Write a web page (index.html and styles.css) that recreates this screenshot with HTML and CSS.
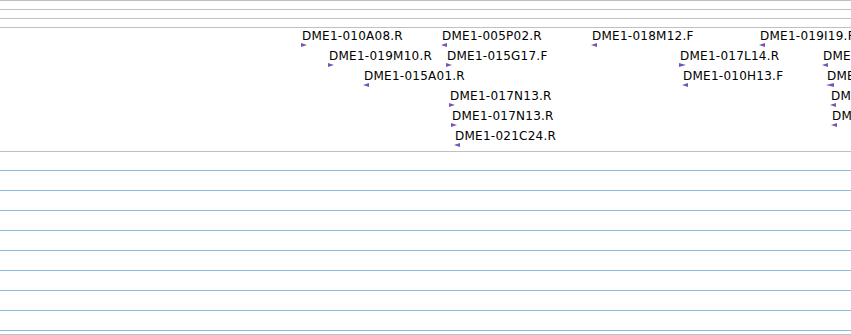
FILE: index.html
```html
<!DOCTYPE html>
<html lang="en">
<head>
    <meta charset="UTF-8">
    <title>Clone track</title>
    <link rel="stylesheet" href="styles.css">
</head>
<body>
    <div class="browser">
        <div class="ruler"></div>
        <div class="ruler"></div>
        <div class="ruler"></div>

        <div class="clones">
            <!-- row 1 -->
            <div class="feat row1" style="left:301px"><span class="name">DME1-010A08.R</span><i class="arrow fwd"></i></div>
            <div class="feat row1" style="left:441px"><span class="name">DME1-005P02.R</span><i class="arrow rev"></i></div>
            <div class="feat row1" style="left:591px"><span class="name">DME1-018M12.F</span><i class="arrow rev"></i></div>
            <div class="feat row1" style="left:759px"><span class="name">DME1-019I19.F</span><i class="arrow rev"></i></div>
            <!-- row 2 -->
            <div class="feat row2" style="left:328px"><span class="name">DME1-019M10.R</span><i class="arrow fwd"></i></div>
            <div class="feat row2" style="left:446px"><span class="name">DME1-015G17.F</span><i class="arrow fwd"></i></div>
            <div class="feat row2" style="left:679px"><span class="name">DME1-017L14.R</span><i class="arrow fwd wide"></i></div>
            <div class="feat row2" style="left:822px"><span class="name">DME1-012B05.F</span><i class="arrow rev"></i></div>
            <!-- row 3 -->
            <div class="feat row3" style="left:363px"><span class="name">DME1-015A01.R</span><i class="arrow rev"></i></div>
            <div class="feat row3" style="left:682px"><span class="name">DME1-010H13.F</span><i class="arrow rev"></i></div>
            <div class="feat row3" style="left:826px"><span class="name">DME1-008C11.F</span><i class="arrow rev wide"></i></div>
            <!-- row 4 -->
            <div class="feat row4" style="left:449px"><span class="name">DME1-017N13.R</span><i class="arrow fwd"></i></div>
            <div class="feat row4" style="left:830px"><span class="name">DME1-020K02.F</span><i class="arrow rev"></i></div>
            <!-- row 5 -->
            <div class="feat row5" style="left:451px"><span class="name">DME1-017N13.R</span><i class="arrow fwd"></i></div>
            <div class="feat row5" style="left:831px"><span class="name">DME1-014D09.F</span><i class="arrow rev"></i></div>
            <!-- row 6 -->
            <div class="feat row6" style="left:454px"><span class="name">DME1-021C24.R</span><i class="arrow rev"></i></div>
        </div>

        <div class="lane gray"></div>
        <div class="lane"></div>
        <div class="lane"></div>
        <div class="lane"></div>
        <div class="lane"></div>
        <div class="lane"></div>
        <div class="lane"></div>
        <div class="lane"></div>
        <div class="lane"></div>
        <div class="lane last"></div>
        <div class="ruler end"></div>
    </div>
</body>
</html>
```

FILE: styles.css
```css
* { margin: 0; padding: 0; box-sizing: border-box; }
body, html { background: #fff; font-family: "DejaVu Sans", Verdana, sans-serif; overflow: hidden; }
.browser { width: 851px; height: 335px; overflow: hidden; }
.ruler { height: 9px; border-top: 1px solid #c0c0c0; }
.ruler.end { height: 1px; }
.clones { position: relative; height: 124px; border-top: 1px solid #c0c0c0; }
.feat { position: absolute; display: flex; flex-direction: column; align-items: flex-start; white-space: nowrap; }
.feat .name { display: block; font-size: 12px; line-height: 14px; letter-spacing: 0.25px; color: #000; margin-left: 1px; }
.row1 { top: 1px; }
.row2 { top: 21px; }
.row3 { top: 41px; }
.row4 { top: 61px; }
.row5 { top: 81px; }
.row6 { top: 101px; }
.arrow { display: block; width: 0; height: 0; border-top: 2.5px solid transparent; border-bottom: 2.5px solid transparent; }
.arrow.fwd { border-left: 6px solid #7755b5; }
.arrow.rev { border-right: 6px solid #7755b5; }
.arrow.fwd.wide { border-left-width: 7px; }
.arrow.rev.wide { border-right-width: 8px; }
.lane { height: 20px; border-top: 1px solid #85bfe6; }
.lane.gray { height: 19px; border-top-color: #c0c0c0; }
.lane.last { height: 4px; }
```
